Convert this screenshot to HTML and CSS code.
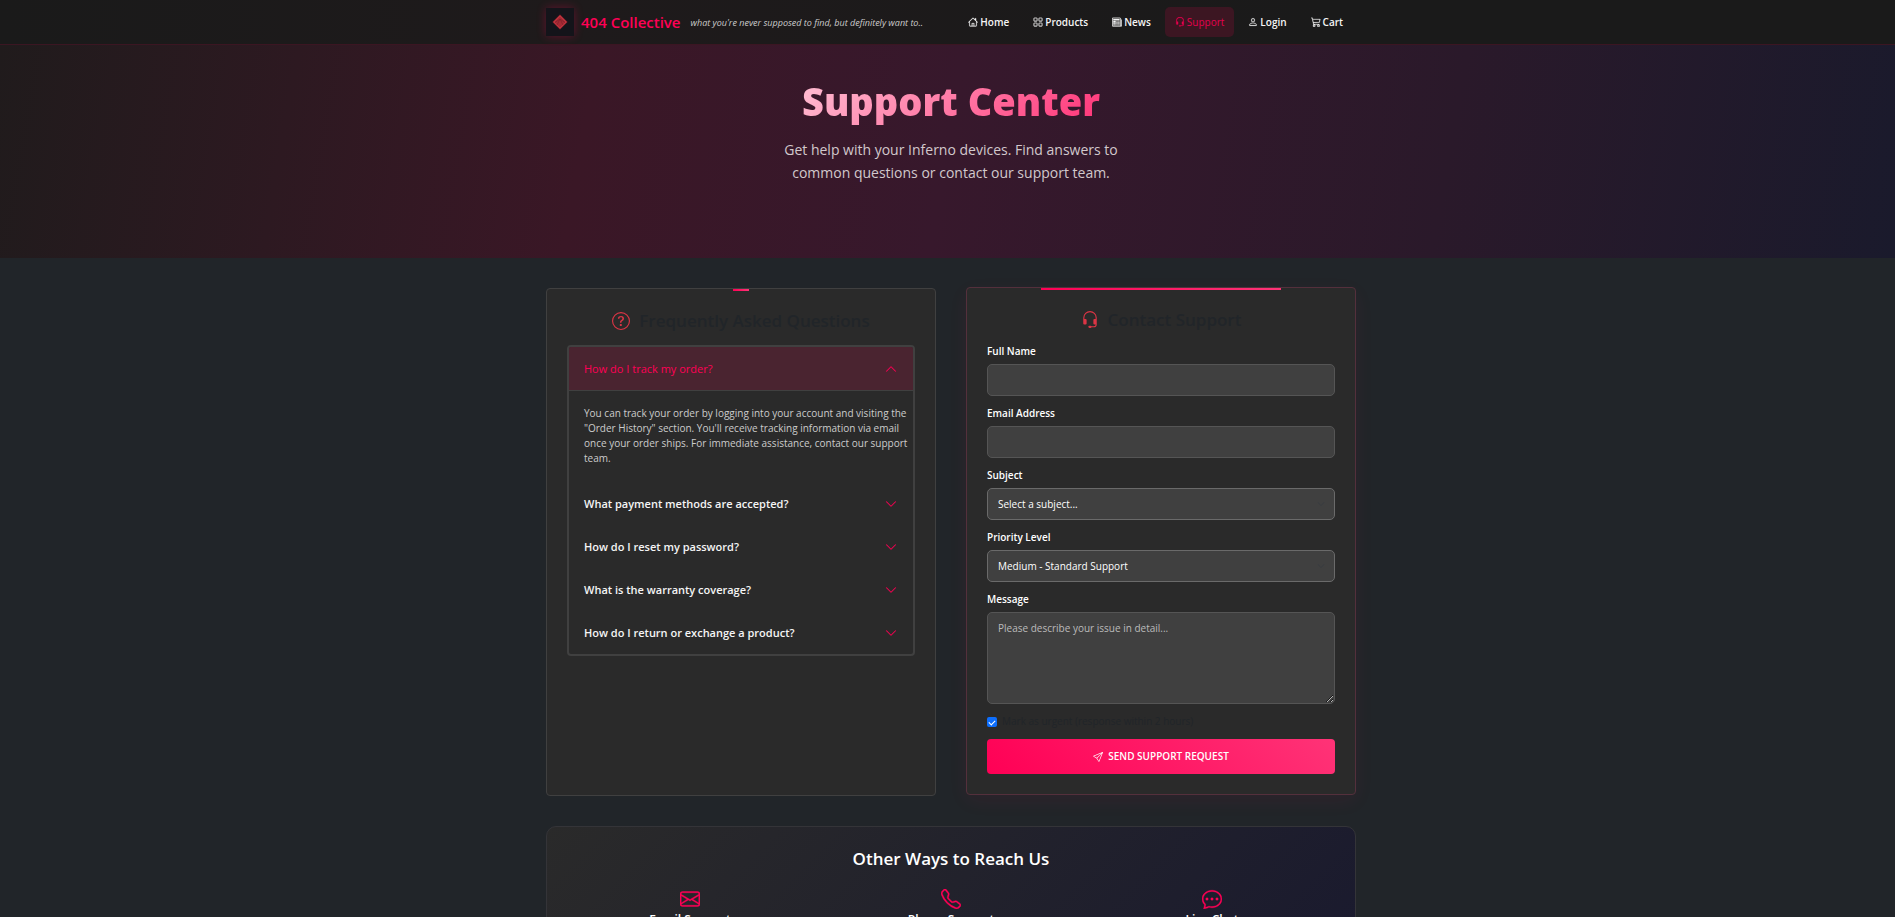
FILE: index.html
```html
<!DOCTYPE html>
<html lang="en">
<head>
<meta charset="utf-8">
<title>Support Center - 404 Collective</title>
<link rel="stylesheet" href="styles.css">
</head>
<body>
<svg class="sprite" aria-hidden="true">
  <symbol id="i-house" viewBox="0 0 16 16"><path d="M8.707 1.5a1 1 0 0 0-1.414 0L.646 8.146a.5.5 0 0 0 .708.708L2 8.207V13.5A1.5 1.5 0 0 0 3.5 15h9a1.500 1.500 0 0 0 1.5-1.5V8.207l.646.647a.5.5 0 0 0 .708-.708L13 5.793V2.500a.5.5 0 0 0-.5-.5h-1a.5.5 0 0 0-.5.5v1.293zM13 7.207V13.500a.5.5 0 0 1-.5.5h-2.500V10a.5.5 0 0 0-.5-.5h-3a.5.5 0 0 0-.5.5v4H3.500a.5.5 0 0 1-.5-.5V7.207l5-5zM9 14H7v-3.500h2z" fill-rule="evenodd"/></symbol>
  <symbol id="i-grid" viewBox="0 0 16 16"><path d="M1 2.500A1.500 1.500 0 0 1 2.500 1h3A1.500 1.500 0 0 1 7 2.500v3A1.500 1.500 0 0 1 5.500 7h-3A1.500 1.500 0 0 1 1 5.500zM2.500 2a.5.5 0 0 0-.5.5v3a.5.5 0 0 0 .5.5h3a.5.5 0 0 0 .5-.5v-3a.5.5 0 0 0-.5-.5zm6.500.5A1.500 1.500 0 0 1 10.500 1h3A1.500 1.500 0 0 1 15 2.500v3A1.500 1.500 0 0 1 13.500 7h-3A1.500 1.500 0 0 1 9 5.500zm1.500-.5a.5.5 0 0 0-.5.5v3a.5.5 0 0 0 .5.5h3a.5.5 0 0 0 .5-.5v-3a.5.5 0 0 0-.5-.5zM1 10.500A1.500 1.500 0 0 1 2.500 9h3A1.500 1.500 0 0 1 7 10.500v3A1.500 1.500 0 0 1 5.500 15h-3A1.500 1.500 0 0 1 1 13.500zm1.500-.5a.5.5 0 0 0-.5.5v3a.5.5 0 0 0 .5.5h3a.5.5 0 0 0 .5-.5v-3a.5.5 0 0 0-.5-.5zm6.500.5A1.500 1.500 0 0 1 10.500 9h3a1.500 1.500 0 0 1 1.500 1.500v3a1.500 1.500 0 0 1-1.500 1.500h-3A1.500 1.500 0 0 1 9 13.500zm1.500-.5a.5.5 0 0 0-.5.5v3a.5.5 0 0 0 .5.5h3a.5.5 0 0 0 .5-.5v-3a.5.5 0 0 0-.5-.5z"/></symbol>
  <symbol id="i-news" viewBox="0 0 16 16"><path d="M0 2.500A1.500 1.500 0 0 1 1.500 1h11A1.500 1.500 0 0 1 14 2.500v10.528c0 .3-.05.654-.238.972h.738a.5.5 0 0 0 .5-.5v-9a.5.5 0 0 1 1 0v9a1.500 1.500 0 0 1-1.500 1.500H1.497A1.497 1.497 0 0 1 0 13.500zM12 14c.37 0 .654-.211.853-.441.092-.106.147-.279.147-.531V2.500a.5.5 0 0 0-.5-.5h-11a.5.5 0 0 0-.5.5v11c0 .278.223.5.497.5z"/><path d="M2 3h10v2H2zm0 3h4v3H2zm0 4h4v1H2zm0 2h4v1H2zm5-6h2v1H7zm3 0h2v1h-2zM7 8h2v1H7zm3 0h2v1h-2zm-3 2h2v1H7zm3 0h2v1h-2zm-3 2h2v1H7zm3 0h2v1h-2z"/></symbol>
  <symbol id="i-headset" viewBox="0 0 16 16"><path d="M8 1a5 5 0 0 0-5 5v1h1a1 1 0 0 1 1 1v3a1 1 0 0 1-1 1H3a1 1 0 0 1-1-1V6a6 6 0 1 1 12 0v6a2.500 2.500 0 0 1-2.500 2.500H9.366a1 1 0 0 1-.866.5h-1a1 1 0 1 1 0-2h1a1 1 0 0 1 .866.5H11.500A1.500 1.500 0 0 0 13 12h-1a1 1 0 0 1-1-1V8a1 1 0 0 1 1-1h1V6a5 5 0 0 0-5-5"/></symbol>
  <symbol id="i-person" viewBox="0 0 16 16"><path d="M8 8a3 3 0 1 0 0-6 3 3 0 0 0 0 6m2-3a2 2 0 1 1-4 0 2 2 0 0 1 4 0m4 8c0 1-1 1-1 1H3s-1 0-1-1 1-4 6-4 6 3 6 4m-1-.004c-.001-.246-.154-.986-.832-1.664C11.516 10.680 10.289 10 8 10s-3.516.680-4.168 1.332c-.678.678-.830 1.418-.832 1.664z"/></symbol>
  <symbol id="i-cart" viewBox="0 0 16 16"><path d="M0 1.500A.5.5 0 0 1 .5 1H2a.5.5 0 0 1 .485.379L2.890 3H14.500a.5.5 0 0 1 .49.598l-1 5a.5.5 0 0 1-.465.401l-9.397.472L4.415 11H13a.5.5 0 0 1 0 1H4a.5.5 0 0 1-.491-.408L2.010 3.607 1.610 2H.5a.5.5 0 0 1-.5-.5M3.102 4l.840 4.479 9.144-.459L13.890 4zM5 12a2 2 0 1 0 0 4 2 2 0 0 0 0-4m7 0a2 2 0 1 0 0 4 2 2 0 0 0 0-4m-7 1a1 1 0 1 1 0 2 1 1 0 0 1 0-2m7 0a1 1 0 1 1 0 2 1 1 0 0 1 0-2"/></symbol>
  <symbol id="i-question" viewBox="0 0 16 16"><path d="M8 15A7 7 0 1 1 8 1a7 7 0 0 1 0 14m0 1A8 8 0 1 0 8 0a8 8 0 0 0 0 16"/><path d="M5.255 5.786a.237.237 0 0 0 .241.247h.825c.138 0 .248-.113.266-.250.090-.656.540-1.134 1.342-1.134.686 0 1.314.343 1.314 1.168 0 .635-.374.927-.965 1.371-.673.489-1.206 1.060-1.168 1.987l.003.217a.25.25 0 0 0 .25.246h.811a.25.25 0 0 0 .25-.25v-.105c0-.718.273-.927 1.010-1.486.609-.463 1.244-.977 1.244-2.056 0-1.511-1.276-2.241-2.673-2.241-1.267 0-2.655.590-2.750 2.286m1.557 5.763c0 .533.425.927 1.010.927.609 0 1.028-.394 1.028-.927 0-.552-.420-.940-1.029-.940-.584 0-1.009.388-1.009.940"/></symbol>
  <symbol id="i-send" viewBox="0 0 16 16"><path d="M15.854.146a.5.5 0 0 1 .110.540l-5.819 14.547a.75.75 0 0 1-1.329.124l-3.178-4.995L.643 7.184a.75.75 0 0 1 .124-1.330L15.314.037a.5.5 0 0 1 .540.110ZM6.636 10.070l2.761 4.338L14.130 2.576zm6.787-8.201L1.591 6.602l4.339 2.760z"/></symbol>
  <symbol id="i-envelope" viewBox="0 0 16 16"><path d="M0 4a2 2 0 0 1 2-2h12a2 2 0 0 1 2 2v8a2 2 0 0 1-2 2H2a2 2 0 0 1-2-2zm2-1a1 1 0 0 0-1 1v.217l7 4.200 7-4.200V4a1 1 0 0 0-1-1zm13 2.383-4.708 2.825L15 11.105zm-.034 6.876-5.640-3.471L8 9.583l-1.326-.795-5.640 3.470A1 1 0 0 0 2 13h12a1 1 0 0 0 .966-.741M1 11.105l4.708-2.897L1 5.383z"/></symbol>
  <symbol id="i-phone" viewBox="0 0 16 16"><path d="M3.654 1.328a.678.678 0 0 0-1.015-.063L1.605 2.300c-.483.484-.661 1.169-.450 1.770a17.600 17.600 0 0 0 4.168 6.608 17.600 17.600 0 0 0 6.608 4.168c.601.211 1.286.033 1.770-.450l1.034-1.034a.678.678 0 0 0-.063-1.015l-2.307-1.794a.68.68 0 0 0-.580-.122l-2.190.547a1.750 1.750 0 0 1-1.657-.459L5.482 8.062a1.750 1.750 0 0 1-.460-1.657l.548-2.190a.68.68 0 0 0-.122-.580zM1.884.511a1.745 1.745 0 0 1 2.612.163L6.290 2.980c.329.423.445.974.315 1.494l-.547 2.190a.68.68 0 0 0 .178.643l2.457 2.457a.68.68 0 0 0 .644.178l2.189-.547a1.750 1.750 0 0 1 1.494.315l2.306 1.794c.829.645.905 1.870.163 2.611l-1.034 1.034c-.740.740-1.846 1.065-2.877.702a18.600 18.600 0 0 1-7.010-4.420 18.600 18.600 0 0 1-4.420-7.009c-.362-1.030-.037-2.137.703-2.877z"/></symbol>
  <symbol id="i-chat" viewBox="0 0 16 16"><path d="M5 8a1 1 0 1 1-2 0 1 1 0 0 1 2 0m4 0a1 1 0 1 1-2 0 1 1 0 0 1 2 0m3 1a1 1 0 1 0 0-2 1 1 0 0 0 0 2"/><path d="m2.165 15.803.020-.004c1.830-.363 2.948-.842 3.468-1.105A9 9 0 0 0 8 15c4.418 0 8-3.134 8-7s-3.582-7-8-7-8 3.134-8 7c0 1.760.743 3.370 1.970 4.600a10.400 10.400 0 0 1-.524 2.318l-.003.011a11 11 0 0 1-.244.637c-.079.186.074.394.273.362a22 22 0 0 0 .693-.125m.8-3.108a1 1 0 0 0-.287-.801C1.618 10.830 1 9.468 1 8c0-3.192 3.004-6 7-6s7 2.808 7 6-3.004 6-7 6a8 8 0 0 1-2.088-.272 1 1 0 0 0-.711.074c-.387.196-1.240.570-2.634.893a11 11 0 0 0 .398-2"/></symbol>
  <symbol id="i-chevron" viewBox="0 0 16 16"><path d="M1.646 4.646a.5.5 0 0 1 .708 0L8 10.293l5.646-5.647a.5.5 0 0 1 .708.708l-6 6a.5.5 0 0 1-.708 0l-6-6a.5.5 0 0 1 0-.708"/></symbol>
</svg>

<header class="navbar">
  <div class="container navbar-inner">
    <a class="brand" href="#">
      <svg class="logo" viewBox="0 0 28 28" aria-hidden="true">
        <rect width="28" height="28" fill="#14141a"/>
        <path d="M14 6.500 21.500 14 14 21.500 6.500 14z" fill="#a52a34"/>
        <path d="M14 8 20 14 14 20 8 14z" fill="none" stroke="#d03a44" stroke-width=".7"/>
        <path d="M9 14.500 14 11l5 3.500M14 11l-3 6m3-6 3 6" fill="none" stroke="#7c1c28" stroke-width=".6"/>
      </svg>
      <span class="brand-name">404 Collective</span>
      <em class="tagline">what you're never supposed to find, but definitely want to..</em>
    </a>
    <nav class="nav">
      <a class="nav-link" href="#"><svg class="icon"><use href="#i-house"/></svg>Home</a>
      <a class="nav-link" href="#"><svg class="icon"><use href="#i-grid"/></svg>Products</a>
      <a class="nav-link" href="#"><svg class="icon"><use href="#i-news"/></svg>News</a>
      <a class="nav-link active" href="#"><svg class="icon"><use href="#i-headset"/></svg>Support</a>
      <a class="nav-link" href="#"><svg class="icon"><use href="#i-person"/></svg>Login</a>
      <a class="nav-link" href="#"><svg class="icon"><use href="#i-cart"/></svg>Cart</a>
    </nav>
  </div>
</header>

<section class="hero">
  <h1 class="hero-title">Support Center</h1>
  <p class="hero-text">Get help with your Inferno devices. Find answers to common questions or contact our support team.</p>
</section>

<main class="main">
  <div class="container">
  <div class="cards">
    <section class="card faq">
      <h2 class="card-title"><svg class="icon title-icon"><use href="#i-question"/></svg>Frequently Asked Questions</h2>
      <div class="accordion">
        <button class="question open" type="button" aria-expanded="true">How do I track my order?<svg class="icon chevron"><use href="#i-chevron"/></svg></button>
        <p class="answer">You can track your order by logging into your account and visiting the "Order History" section. You'll receive tracking information via email once your order ships. For immediate assistance, contact our support team.</p>
        <button class="question" type="button">What payment methods are accepted?<svg class="icon chevron"><use href="#i-chevron"/></svg></button>
        <button class="question" type="button">How do I reset my password?<svg class="icon chevron"><use href="#i-chevron"/></svg></button>
        <button class="question" type="button">What is the warranty coverage?<svg class="icon chevron"><use href="#i-chevron"/></svg></button>
        <button class="question" type="button">How do I return or exchange a product?<svg class="icon chevron"><use href="#i-chevron"/></svg></button>
      </div>
    </section>

    <section class="card contact">
      <h2 class="card-title"><svg class="icon title-icon"><use href="#i-headset"/></svg>Contact Support</h2>
      <form class="form">
        <div class="field"><label for="name">Full Name</label><input class="control" id="name" type="text"></div>
        <div class="field"><label for="email">Email Address</label><input class="control" id="email" type="email"></div>
        <div class="field"><label for="subject">Subject</label>
          <div class="select-wrap"><select class="control select" id="subject"><option>Select a subject...</option></select><svg class="icon select-arrow"><use href="#i-chevron"/></svg></div></div>
        <div class="field"><label for="priority">Priority Level</label>
          <div class="select-wrap"><select class="control select" id="priority"><option>Medium - Standard Support</option></select><svg class="icon select-arrow"><use href="#i-chevron"/></svg></div></div>
        <div class="field"><label for="message">Message</label><textarea class="control message" id="message" placeholder="Please describe your issue in detail..."></textarea></div>
        <div class="check"><input id="urgent" type="checkbox" checked><label for="urgent">Mark as urgent (response within 2 hours)</label></div>
        <button class="submit" type="submit"><svg class="icon"><use href="#i-send"/></svg>SEND SUPPORT REQUEST</button>
      </form>
    </section>
  </div>

  <section class="reach">
    <h2 class="reach-title">Other Ways to Reach Us</h2>
    <div class="reach-grid">
      <div class="reach-item"><svg class="icon reach-icon"><use href="#i-envelope"/></svg><h3>Email Support</h3></div>
      <div class="reach-item"><svg class="icon reach-icon"><use href="#i-phone"/></svg><h3>Phone Support</h3></div>
      <div class="reach-item"><svg class="icon reach-icon"><use href="#i-chat"/></svg><h3>Live Chat</h3></div>
    </div>
  </section>
  </div>
</main>
</body>
</html>
```

FILE: styles.css
```css
* { box-sizing: border-box; }

html, body { height: 100%; }

body {
  margin: 0;
  overflow: hidden;
  background: #212529;
  color: #fff;
  font: 10px/15px "Open Sans", "Noto Sans", sans-serif;
}

h1, h2, h3, p { margin: 0; }
a { color: inherit; text-decoration: none; }
button, input, select, textarea { font: inherit; }

.sprite { position: absolute; width: 0; height: 0; }
.icon { width: 10px; height: 10px; fill: currentColor; flex: none; }

.navbar, .hero, .main { padding-left: 7px; }
.container { width: 100%; max-width: 810px; margin: 0 auto; }

.navbar {
  background: linear-gradient(90deg, #1a1a1a, #1e1a1b 30%, #1a1a1a 70%);
  border-bottom: 1px solid #3b1622;
}
.navbar-inner { display: flex; align-items: center; justify-content: space-between; height: 44px; }
.brand { display: flex; align-items: center; }
.logo { width: 28px; height: 28px; box-shadow: 0 0 10px rgba(255, 0, 85, .3); }
.brand-name { margin-left: 7px; color: #ff0055; font-size: 15px; font-weight: 600; }
.tagline { margin-left: 10px; color: #ccc; font-size: 9px; }

.nav { display: flex; gap: 4px; }
.nav .icon { stroke: currentColor; stroke-width: .3; }
.nav-link {
  display: flex;
  align-items: center;
  gap: 2px;
  height: 30px;
  padding: 0 10px;
  border-radius: 5px;
  font-weight: 600;
  color: #f5f5f5;
}
.nav-link:last-child { padding-right: 13px; }
.nav-link.active { background: #3c1622; color: #e6004d; font-weight: 400; }

.hero {
  height: 213px;
  padding-top: 30px;
  text-align: center;
  background: linear-gradient(100deg, #201b1c 0%, #3a1726 31%, #37182c 50%, #2a192a 76%, #1a1a2c 100%);
}
.hero-title {
  width: fit-content;
  margin: 0 auto;
  font-size: 38px;
  line-height: 52px;
  font-weight: 800;
  color: transparent;
  background: linear-gradient(135deg, #ffc0d4, #ff3377);
  background-clip: text;
}
.hero-text {
  max-width: 380px;
  margin: 11px auto 0;
  padding: 0 10px;
  font-size: 14px;
  line-height: 23px;
  color: #d2c8cc;
}

.cards { display: grid; grid-template-columns: 1fr 1fr; gap: 30px; padding-top: 30px; }
.card {
  position: relative;
  padding: 20px;
  border: 1px solid #404040;
  border-radius: 4px;
  background: #2a2a2a;
}
.card::before {
  content: "";
  position: absolute;
  top: 0;
  left: 50%;
  width: 16px;
  height: 2px;
  transform: translateX(-50%);
  background: linear-gradient(90deg, #ff0055, #ff3377);
}
.contact {
  margin: -1px 0 1px;
  border-color: #54303c;
  box-shadow: 0 6px 20px rgba(255, 0, 85, .06);
}
.contact::before { width: 240px; }
.card-title {
  display: flex;
  align-items: center;
  justify-content: center;
  gap: 9px;
  margin-bottom: 12px;
  color: #212529;
  font-size: 17px;
  line-height: 24px;
  font-weight: 600;
}
.title-icon { width: 18px; height: 18px; color: #dc3545; }

.accordion { border: 2px solid #404040; border-radius: 4px; overflow: hidden; }
.question {
  display: flex;
  align-items: center;
  justify-content: space-between;
  width: 100%;
  height: 43px;
  padding: 0 16px 0 15px;
  border: 0;
  background: none;
  color: #f5f5f5;
  font-size: 11px;
  font-weight: 600;
}
.question.open { height: 44px; background: #4a2430; border-bottom: 1px solid #404040; color: #ff0055; font-weight: 400; }
.chevron { width: 12px; height: 12px; color: #ff0055; stroke: currentColor; stroke-width: .3; }
.open .chevron { transform: rotate(180deg); }
.answer { padding: 15px 0 16px 15px; color: #ccc; }

.field { margin-bottom: 10px; }
.field label { display: block; margin-bottom: 5px; font-weight: 600; }
.control {
  display: block;
  width: 100%;
  height: 32px;
  padding: 0 10px;
  border: 1px solid #555;
  border-radius: 5px;
  background: #404040;
  color: #fff;
}
.select-wrap { position: relative; }
.select { appearance: none; border-color: #6a6a6a; }
.select-arrow { position: absolute; top: 12px; right: 10px; width: 8px; height: 8px; color: #343a40; }
.message { height: 92px; padding: 8px 10px; resize: vertical; }
.message::placeholder { color: #bbb; opacity: 1; }
.check { display: flex; align-items: center; gap: 5px; margin: 10px 0; color: #212529; }
.check input {
  display: grid;
  place-items: center;
  width: 10px;
  height: 10px;
  margin: 0;
  appearance: none;
  border-radius: 2px;
  background: #0d6efd;
}
.check input:checked::before {
  content: "";
  width: 5px;
  height: 3px;
  border: solid #fff;
  border-width: 0 0 1px 1px;
  transform: rotate(-45deg);
}
.submit {
  display: flex;
  align-items: center;
  justify-content: center;
  gap: 5px;
  width: 100%;
  height: 35px;
  border: 0;
  border-radius: 4px;
  background: linear-gradient(45deg, #ff0055, #ff3377);
  color: #fff;
  font-weight: 600;
}

.reach {
  margin-top: 30px;
  padding: 20px;
  border: 1px solid #343438;
  border-radius: 10px;
  background: linear-gradient(135deg, #2a2a2a, #1a1a2e);
}
.reach-title { text-align: center; font-size: 17px; line-height: 24px; font-weight: 600; }
.reach-grid { display: grid; grid-template-columns: repeat(3, 1fr); gap: 15px; margin-top: 18px; }
.reach-item { display: flex; flex-direction: column; align-items: center; }
.reach-icon { width: 20px; height: 20px; color: #ff0055; stroke: currentColor; stroke-width: .3; }
.reach-item h3 { margin-top: 3px; font-size: 12px; line-height: 16px; font-weight: 600; }
```
